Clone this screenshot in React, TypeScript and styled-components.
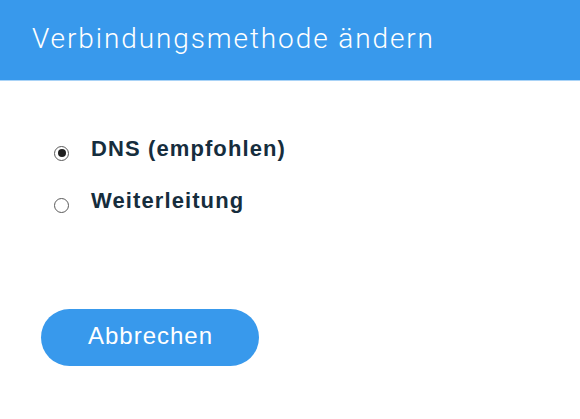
import React, { useState } from "react";
import styled, { createGlobalStyle } from "styled-components";

const Global = createGlobalStyle`
  html, body { margin: 0; padding: 0; background: #fff; }
  body { font-family: "Liberation Sans", Arial, sans-serif; }
`;

const Page = styled.div`
  width: 580px;
  height: 419px;
  display: flex;
  flex-direction: column;
  background: #fff;
`;

const Header = styled.header`
  height: 81px;
  background: #3899ec;
  border-bottom: 1px solid #a9d3f7;
  display: flex;
  align-items: center;
  padding: 0 0 4px 32px;
  box-sizing: border-box;
`;

const Title = styled.h1`
  margin: 0;
  font-family: Roboto, "Liberation Sans", Arial, sans-serif;
  font-weight: 300;
  font-size: 28px;
  color: #fff;
  letter-spacing: 1.9px;
`;

const Body = styled.div`
  display: flex;
  flex-direction: column;
  padding: 53px 0 0 54px;
  gap: 22px;
`;

const Option = styled.label`
  display: flex;
  align-items: center;
  gap: 22px;
  font-size: 22px;
  line-height: 30px;
  height: 30px;
  font-weight: 700;
  letter-spacing: 1.1px;
  color: #162d3d;
  cursor: pointer;
`;

const Radio = styled.span<{ $checked: boolean }>`
  flex: none;
  width: 15px;
  height: 15px;
  border-radius: 50%;
  border: 1.5px solid #5a5a5a;
  box-sizing: border-box;
  display: flex;
  align-items: center;
  justify-content: center;
  margin-top: 8px;
  &::after {
    content: "";
    width: 8px;
    height: 8px;
    border-radius: 50%;
    background: ${(p) => (p.$checked ? "#1f1f1f" : "transparent")};
  }
`;

const Footer = styled.div`
  padding: 93px 0 0 41px;
`;

const Button = styled.button`
  width: 218px;
  height: 57px;
  border: none;
  border-radius: 29px;
  background: #3899ec;
  color: #fff;
  font-family: "Liberation Sans", Arial, sans-serif;
  font-size: 24px;
  letter-spacing: 1px;
  padding: 0 0 3px 1px;
  cursor: pointer;
`;

export default function App() {
  const [value, setValue] = useState("dns");
  const options = [
    { id: "dns", label: "DNS (empfohlen)" },
    { id: "fwd", label: "Weiterleitung" },
  ];
  return (
    <Page>
      <Global />
      <Header>
        <Title>Verbindungsmethode ändern</Title>
      </Header>
      <Body>
        {options.map((o) => (
          <Option key={o.id} onClick={() => setValue(o.id)}>
            <Radio $checked={value === o.id} />
            {o.label}
          </Option>
        ))}
      </Body>
      <Footer>
        <Button>Abbrechen</Button>
      </Footer>
    </Page>
  );
}
